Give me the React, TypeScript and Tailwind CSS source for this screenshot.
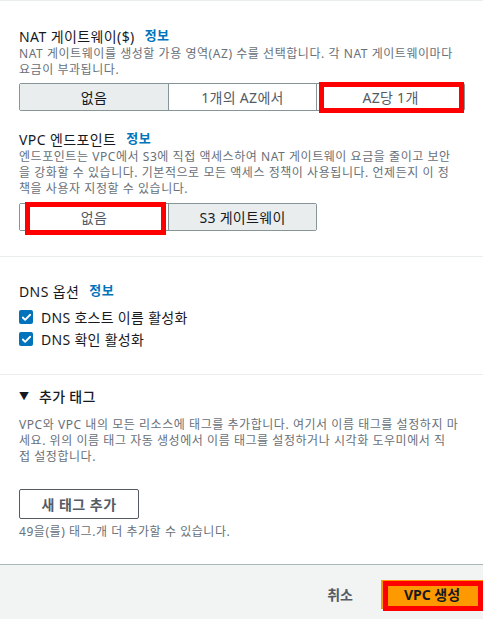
import { Check } from 'lucide-react';

const font = 'font-["Noto_Sans","Noto_Sans_CJK_KR",sans-serif]';

function Info() {
  return <span className="ml-[10px] text-[13px] font-bold text-[#0073bb]">정보</span>;
}

function Label({ children }: { children: React.ReactNode }) {
  return (
    <div className="flex h-[20px] items-center text-[14px] tracking-[0.4px] text-[#16191f]">
      <span>{children}</span>
      <Info />
    </div>
  );
}

function Desc({ lines }: { lines: string[] }) {
  return (
    <div className="text-[12px] leading-[16px] tracking-[0.55px] text-[#687078]">
      {lines.map((l) => (
        <div key={l} className="whitespace-nowrap">
          {l}
        </div>
      ))}
    </div>
  );
}

function Segmented({ options, selected }: { options: string[]; selected: number }) {
  return (
    <div className="flex h-[28px] w-fit overflow-hidden rounded-[2px] border border-[#879596]">
      {options.map((opt, i) => (
        <div
          key={opt}
          className={
            'flex w-[148px] items-center justify-center text-[14px] tracking-[0.3px] ' +
            (i > 0 ? 'border-l border-[#879596] ' : '') +
            (i === selected ? 'bg-[#eaeded] text-[#16191f]' : 'bg-white text-[#545b64]')
          }
        >
          {opt}
        </div>
      ))}
    </div>
  );
}

function CheckRow({ label }: { label: string }) {
  return (
    <div className="flex h-[22px] items-center gap-[8px]">
      <span className="flex h-[14px] w-[14px] items-center justify-center rounded-[2px] bg-[#0073bb]">
        <Check className="h-[11px] w-[11px] text-white" strokeWidth={4} />
      </span>
      <span className="text-[14px] tracking-[0.3px] text-[#16191f]">{label}</span>
    </div>
  );
}

export default function App() {
  return (
    <div className={`relative min-h-screen w-full bg-white ${font}`}>
      <div className="h-px bg-[#eaeded]" />

      {/* NAT / endpoints */}
      <div className="px-[19px] pt-[25px] pb-[25px]">
        <Label>NAT 게이트웨이($)</Label>
        <Desc
          lines={[
            'NAT 게이트웨이를 생성할 가용 영역(AZ) 수를 선택합니다. 각 NAT 게이트웨이마다',
            '요금이 부과됩니다.',
          ]}
        />
        <div className="mt-[5px]">
          <Segmented options={['없음', '1개의 AZ에서', 'AZ당 1개']} selected={0} />
        </div>

        <div className="mt-[18px]">
          <Label>VPC 엔드포인트</Label>
          <Desc
            lines={[
              '엔드포인트는 VPC에서 S3에 직접 액세스하여 NAT 게이트웨이 요금을 줄이고 보안',
              '을 강화할 수 있습니다. 기본적으로 모든 액세스 정책이 사용됩니다. 언제든지 이 정',
              '책을 사용자 지정할 수 있습니다.',
            ]}
          />
          <div className="mt-[6px]">
            <Segmented options={['없음', 'S3 게이트웨이']} selected={1} />
          </div>
        </div>
      </div>

      <div className="h-px bg-[#eaeded]" />

      {/* DNS */}
      <div className="px-[19px] pt-[24px] pb-[24px]">
        <Label>DNS 옵션</Label>
        <div className="mt-[5px]">
          <CheckRow label="DNS 호스트 이름 활성화" />
          <CheckRow label="DNS 확인 활성화" />
        </div>
      </div>

      <div className="h-px bg-[#eaeded]" />

      {/* Tags */}
      <div className="px-[19px] pt-[11px] pb-[24px]">
        <div className="flex h-[20px] items-center gap-[10px] text-[14px] text-[#16191f]">
          <span className="text-[10px]">▼</span>
          <span className="font-medium tracking-[0.3px]">추가 태그</span>
        </div>
        <div className="mt-[11px]">
          <Desc
            lines={[
              'VPC와 VPC 내의 모든 리소스에 태그를 추가합니다. 여기서 이름 태그를 설정하지 마',
              '세요. 위의 이름 태그 자동 생성에서 이름 태그를 설정하거나 시각화 도우미에서 직',
              '접 설정합니다.',
            ]}
          />
        </div>
        <button className="mt-[24px] flex h-[30px] w-[120px] items-center justify-center rounded-[2px] border border-[#545b64] text-[14px] font-bold tracking-[0.5px] text-[#545b64]">
          새 태그 추가
        </button>
        <div className="mt-[5px]">
          <Desc lines={['49을(를) 태그.개 더 추가할 수 있습니다.']} />
        </div>
      </div>

      {/* Footer */}
      <div className="flex h-[56px] items-start justify-end border-t border-[#aab7b8] bg-[#f2f3f3] pt-[15px]">
        <div className="flex h-[29px] items-center">
          <span className="mr-[28px] text-[14px] font-bold text-[#545b64]">취소</span>
          <button className="flex h-[29px] w-[102px] items-center justify-center bg-[#ff9900] text-[14px] font-bold text-[#16191f]">
            VPC 생성
          </button>
        </div>
      </div>

      {/* annotation boxes */}
      <div className="pointer-events-none absolute left-[319px] top-[82px] h-[31px] w-[145px] border-[5px] border-[#ff0000]" />
      <div className="pointer-events-none absolute left-[25px] top-[202px] h-[33px] w-[141px] border-[5px] border-[#ff0000]" />
      <div className="pointer-events-none absolute left-[383px] top-[581px] h-[30px] w-[100px] border-[5px] border-[#ff0000]" />
    </div>
  );
}
